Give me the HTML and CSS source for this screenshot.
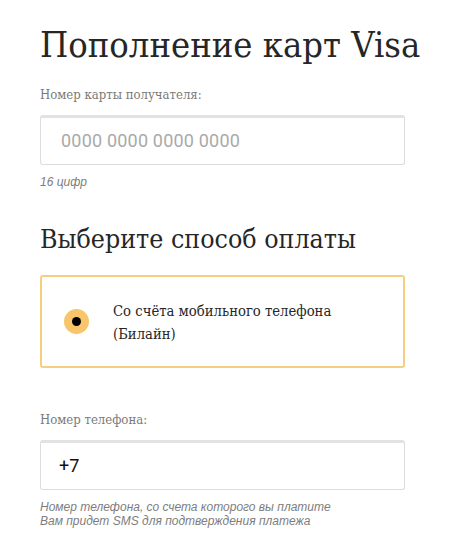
FILE: index.html
```html
<!DOCTYPE html>
<html lang="ru">
<head>
<meta charset="utf-8">
<title>Пополнение карт Visa</title>
<link rel="stylesheet" href="styles.css">
</head>
<body>
<main class="page">
  <h1 class="title">Пополнение карт Visa</h1>
  <label class="label" for="card">Номер карты получателя:</label>
  <div class="input"><span class="placeholder">0000 0000 0000 0000</span></div>
  <p class="hint">16 цифр</p>

  <h2 class="subtitle">Выберите способ оплаты</h2>
  <div class="option">
    <span class="radio"><span class="radio-dot"></span></span>
    <span class="option-text">Со счёта мобильного телефона<br>(Билайн)</span>
  </div>

  <label class="label label-phone">Номер телефона:</label>
  <div class="input"><span class="value">+7</span></div>
  <p class="hint">Номер телефона, со счета которого вы платите<br>Вам придет SMS для подтверждения платежа</p>
</main>
</body>
</html>
```
FILE: styles.css
```css
* { box-sizing: border-box; }
body {
  margin: 0;
  background: #fff;
  font-family: "DejaVu Serif Condensed", "DejaVu Serif", serif;
  color: #222;
}
.page {
  padding: 22px 54px 0 40px;
  display: flex;
  flex-direction: column;
}
.title {
  margin: 0;
  font-weight: normal;
  font-size: 36px;
  line-height: 46px;
  color: #262626;
  white-space: nowrap;
}
.label {
  margin-top: 19px;
  font-size: 13px;
  line-height: 16px;
  color: #7a7a7a;
}
.input {
  margin-top: 12px;
  height: 50px;
  border: 1px solid #dcdcdc;
  border-top: 3px solid #e2e2e2;
  border-radius: 3px;
  display: flex;
  align-items: center;
  padding: 0 0 2px 18px;
  font-family: "Roboto", "Liberation Sans", sans-serif;
  font-size: 18px;
}
.placeholder { color: #a9a9a9; padding-left: 2px; letter-spacing: 0.2px; }
.value { color: #111; }
.hint {
  margin: 10px 0 0;
  font-family: "Liberation Sans", Arial, sans-serif;
  font-style: italic;
  font-size: 12px;
  line-height: 14px;
  color: #7d7d7d;
}
.subtitle {
  margin: 33px 0 0;
  font-weight: normal;
  font-size: 26.5px;
  line-height: 34px;
  color: #262626;
}
.option {
  margin-top: 19px;
  height: 93px;
  border: 2px solid #f5cf80;
  border-radius: 3px;
  display: flex;
  align-items: center;
  padding-left: 22px;
  gap: 24px;
}
.radio {
  width: 25px;
  height: 25px;
  border-radius: 50%;
  background: #f7c66a;
  display: flex;
  align-items: center;
  justify-content: center;
  flex: none;
}
.radio-dot {
  width: 9px;
  height: 9px;
  border-radius: 50%;
  background: #000;
}
.option-text {
  font-size: 14.7px;
  line-height: 23px;
  color: #262626;
}
.label-phone { margin-top: 44px; }
```
